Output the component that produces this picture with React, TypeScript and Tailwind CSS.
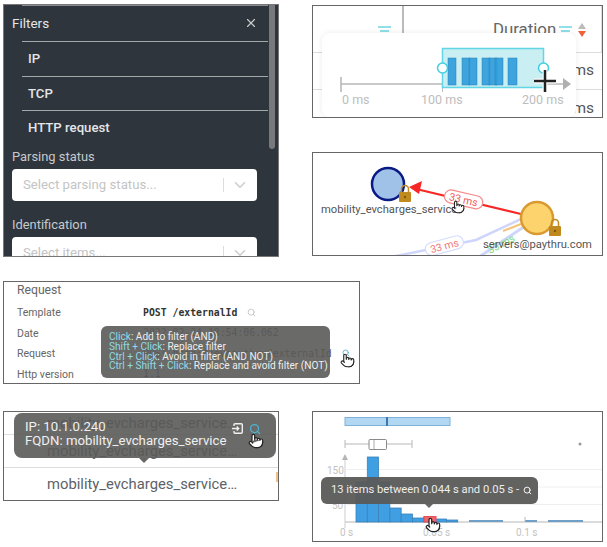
import React from "react";
import { ChevronDown, Pointer, Search, X } from "lucide-react";

function Hand({ className, size = 16 }: { className: string; size?: number }) {
  return (
    <Pointer
      size={size}
      strokeWidth={1.8}
      className={`absolute text-[#222] fill-white ${className}`}
    />
  );
}

function Lock({ x, y }: { x: number; y: number }) {
  return (
    <g transform={`translate(${x} ${y})`}>
      <path d="M-3.5 -1v-3a3.5 3.5 0 0 1 7 0v3" fill="none" stroke="#c08a1e" strokeWidth="1.5" />
      <rect x="-6" y="-1" width="12" height="10" rx="1" fill="#c08a1e" />
      <circle cx="0" cy="4" r="1.2" fill="#7d5a12" />
    </g>
  );
}

function FilterSelect({ label }: { label: string }) {
  return (
    <div className="flex h-8 w-[245px] shrink-0 items-center rounded bg-white pl-[11px] pr-[8px] text-[13.2px] text-[#c4c4c4]">
      <span className="flex-1">{label}</span>
      <span className="h-[14px] w-px bg-[#ddd]" />
      <ChevronDown size={18} className="ml-[7px] text-[#ccc]" />
    </div>
  );
}

function FiltersPanel() {
  return (
    <div className="relative h-[253px] w-[276px] overflow-hidden border border-[#777] bg-[#2f353d] text-[#e4e6e8]">
      <div className="absolute right-[3px] top-0 h-[144px] w-[6px] rounded-b bg-[#77797c]" />
      <div className="ml-[18px] mr-[10px] h-px bg-[#8a8d91]" />
      <div className="flex h-[35px] items-center justify-between pb-px pl-[8px] pr-[20px] text-[13.5px]">
        <span>Filters</span>
        <X size={14} className="text-[#c8cacc]" />
      </div>
      <div className="ml-[18px] mr-[10px]">
        {["IP", "TCP", "HTTP request"].map((name) => (
          <div
            key={name}
            className="flex h-[34.7px] items-center border-t border-[#a5a8ab] pl-[6px] text-[13.2px] font-medium"
          >
            {name}
          </div>
        ))}
      </div>
      <div className="mt-[2px] flex flex-col px-[8px] text-[12.9px] text-[#c6c9cc]">
        <span className="mb-[2px] leading-[20px]">Parsing status</span>
        <FilterSelect label="Select parsing status..." />
        <span className="mb-[2px] mt-[14px] leading-[20px]">Identification</span>
        <FilterSelect label="Select items..." />
      </div>
    </div>
  );
}

function DurationPanel() {
  const bars = [
    [448, 8], [462, 8], [469, 8], [482, 8], [489, 8], [495, 8], [508, 9],
  ];
  return (
    <div className="relative h-[113px] w-[291px] overflow-hidden border border-[#666] bg-white text-[#555]">
      <div className="flex h-[47px] border-b border-[#ddd]">
        <div className="relative w-[91px] border-r-2 border-[#bbb]">
          <div className="absolute right-[11px] top-[20px] flex w-[13px] flex-col items-center gap-[2px]">
            <span className="h-[2px] w-[13px] bg-[#8fe0e8]" />
            <span className="h-[2px] w-[9px] bg-[#8fe0e8]" />
            <span className="h-[2px] w-[5px] bg-[#8fe0e8]" />
          </div>
        </div>
        <div className="relative flex-1 border-r border-[#ddd]">
          <span className="absolute left-[89px] top-[11px] text-[16.8px] text-[#666]">Duration</span>
          <div className="absolute left-[155px] top-[20px] flex w-[13px] flex-col items-center gap-[2px]">
            <span className="h-[2px] w-[13px] bg-[#8fe0e8]" />
            <span className="h-[2px] w-[9px] bg-[#8fe0e8]" />
            <span className="h-[2px] w-[5px] bg-[#8fe0e8]" />
          </div>
          <div className="absolute left-[174px] top-[17px] h-0 w-0 border-x-[4px] border-b-[6px] border-x-transparent border-b-[#bbb]" />
          <div className="absolute left-[174px] top-[25px] h-0 w-0 border-x-[4px] border-t-[6px] border-x-transparent border-t-[#f0603a]" />
        </div>
      </div>
      <div className="flex h-[37px] items-center justify-end border-b border-[#ddd] pr-[8px] text-[15.5px]">ms</div>
      <div className="flex h-[37px] items-center justify-end pr-[8px] text-[15.5px]">ms</div>

      {/* range picker floating above the table */}
      <div className="absolute left-[9px] top-[27px] h-[84px] w-[254px] rounded-lg bg-white shadow-[0_0_6px_rgba(0,0,0,0.08)]">
        <svg width="254" height="84" className="block">
          <g transform="translate(-322 -33)">
            <line x1="341" y1="84" x2="564" y2="84" stroke="#c9c9c9" strokeWidth="2" />
            <path d="M563 78l8 6-8 6z" fill="#b0b0b0" />
            <line x1="341" y1="77" x2="341" y2="92" stroke="#b5b5b5" strokeWidth="1.5" />
            <line x1="442.500" y1="84" x2="442.500" y2="92" stroke="#c0c0c0" />
            <rect x="442.500" y="48.500" width="101" height="39" fill="#c9eff3" stroke="#62d6e4" strokeWidth="1.500" />
            {bars.map(([x, w]) => (
              <rect key={x} x={x} y="58" width={w} height="27" fill="#2f9bdc" fillOpacity="0.9" stroke="#2b7fb8" strokeWidth="0.5" />
            ))}
            <circle cx="442.500" cy="68" r="5" fill="white" stroke="#3fd0e0" strokeWidth="1.500" />
            <circle cx="543.500" cy="68" r="5" fill="white" stroke="#3fd0e0" strokeWidth="1.500" />
            <text x="342" y="103.500" fontSize="12.500" fill="#bdbdbd" fontFamily="Roboto, sans-serif">0 ms</text>
            <text x="421" y="103.500" fontSize="12.500" fill="#bdbdbd" fontFamily="Roboto, sans-serif">100 ms</text>
            <text x="522" y="103.500" fontSize="12.500" fill="#bdbdbd" fontFamily="Roboto, sans-serif">200 ms</text>
            <path d="M545 70v22M534 81h22" stroke="white" strokeWidth="5" />
            <path d="M545 70v22M534 81h22" stroke="#222" strokeWidth="2.500" />
          </g>
        </svg>
      </div>
    </div>
  );
}

function GraphPanel() {
  return (
    <div className="relative h-[104px] w-[291px] overflow-hidden border border-[#666] bg-white">
      <svg width="289" height="102" className="block" fontFamily="Roboto, sans-serif">
        <g transform="translate(-313 -153)">
          <path d="M521 219l-45 21-100 20" fill="none" stroke="#cfd6fb" strokeWidth="2.500" />
          <path d="M525 226l-46 31" fill="none" stroke="#cfd6fb" strokeWidth="3" />
          <path d="M521 224l-18 7" fill="none" stroke="#f5c27a" strokeWidth="2" />
          <line x1="521" y1="214" x2="412" y2="188" stroke="#f92626" strokeWidth="2" />
          <path d="M409 187l13-6-3 13z" fill="#f92626" />
          <circle cx="388" cy="184" r="16" fill="#a0c1e8" stroke="#0a1a85" strokeWidth="2.500" />
          <Lock x={405} y={193} />
          <circle cx="537" cy="218" r="16" fill="#fdd36e" stroke="#d99a30" strokeWidth="2.500" />
          <Lock x={555} y={227} />
          <g transform="rotate(13 464 200)">
            <rect x="444" y="193" width="39" height="13" rx="6.500" fill="white" stroke="#f98a8a" strokeWidth="1.200" />
            <text x="463.500" y="203.500" textAnchor="middle" fontSize="10.500" fill="#ef5a5a">33 ms</text>
          </g>
          <g transform="rotate(-15 445 246)">
            <rect x="425" y="239" width="39" height="13" rx="6.500" fill="white" stroke="#d5dcfb" strokeWidth="1.200" />
            <text x="444.500" y="249.500" textAnchor="middle" fontSize="10.500" fill="#ef7a7a">33 ms</text>
          </g>
          <text x="490" y="254" fontSize="10.500" fill="#7bdc7b" transform="rotate(-28 490 254)">33 ms</text>
          <text x="321" y="213" fontSize="11.200" fill="#555">mobility_evcharges_service</text>
          <text x="483" y="248" fontSize="11.200" fill="#555">servers@paythru.com</text>
        </g>
      </svg>
      <Hand size={14} className="left-[138px] top-[47px]" />
    </div>
  );
}

function RequestPanel() {
  const rows = [
    { name: "Template", value: "POST /externalId", strong: true },
    { name: "Date", value: "2022-02-24 18:54:06.062" },
    { name: "Request", value: "POST http://evpaythru/externalId" },
    { name: "Http version", value: "1.1" },
  ];
  return (
    <div className="relative h-[103px] w-[357px] overflow-hidden border border-[#666] bg-white pl-[13px] text-[10.500px] text-[#666]">
      <div className="h-[18px] text-[12.200px] leading-[16px]">Request</div>
      {rows.map((row) => (
        <div key={row.name} className="flex h-[20.500px] items-center">
          <span className="w-[126px] shrink-0 translate-y-[3px]">{row.name}</span>
          <span
            className={`translate-y-[3px] whitespace-nowrap font-['DejaVu_Sans_Mono',monospace] text-[9.800px] ${row.strong ? "font-bold text-[#333]" : "text-[#555]"}`}
          >
            {row.value}
          </span>
          {row.strong && <Search size={9} className="ml-[10px] translate-y-[2px] text-[#bbb]" />}
        </div>
      ))}
      <Search size={8} strokeWidth={2.5} className="absolute left-[338px] top-[67px] text-[#4fa8c8]" />
      <div className="absolute left-[97px] top-[44px] h-[52px] w-[229px] rounded-md bg-[#5a5a58]/90 px-[8px] py-[6px] text-[10.100px] leading-[9.800px] text-[#eeeeee]">
        {[
          ["Click", ": Add to filter (AND)"],
          ["Shift + Click", ": Replace filter"],
          ["Ctrl + Click", ": Avoid in filter (AND NOT)"],
          ["Ctrl + Shift + Click", ": Replace and avoid filter (NOT)"],
        ].map(([key, text]) => (
          <div key={key} className="whitespace-nowrap">
            <span className="text-[#8fdbe6]">{key}</span>
            {text}
          </div>
        ))}
      </div>
      <Hand size={15} className="left-[336px] top-[71px]" />
    </div>
  );
}

function ServicePanel() {
  return (
    <div className="relative h-[90px] w-[276px] overflow-hidden border border-[#666] bg-white text-[#666]">
      {[23, 33, 33].map((height, i) => (
        <div
          key={i}
          style={{ height }}
          className="flex items-center whitespace-nowrap border-b border-[#ddd] pl-[43px] text-[14.800px] text-[#5d6268] last:border-b-0"
        >
          mobility_evcharges_service…
        </div>
      ))}
      <span className="absolute right-0 top-[60px] h-[10px] w-[2px] bg-[#f2c28a]" />
      <div className="absolute left-[10px] top-[1px] h-[45px] w-[262px] rounded-lg bg-[#5a5a58]/90 pl-[11px] pt-[7px] text-[13.200px] leading-[14px] text-[#f0f0f0]">
        <div>IP: 10.1.0.240</div>
        <div>FQDN: mobility_evcharges_service</div>
        {/* box with an arrow going in */}
        <svg width="11" height="11" viewBox="0 0 11 11" fill="none" stroke="#f0f0f0" strokeWidth="1.4" className="absolute left-[218px] top-[10px]">
          <path d="M2 3V1.700A1 1 0 0 1 3 .700h6.300a1 1 0 0 1 1 1v7.600a1 1 0 0 1-1 1H3a1 1 0 0 1-1-1V8" />
          <path d="M0 5.500h6.500M4.700 3.500l2 2-2 2" />
        </svg>
        <Search size={12} strokeWidth={2.5} className="absolute left-[235px] top-[10px] text-[#4fb3d0]" />
      </div>
      <div className="absolute left-[135px] top-[46px] h-0 w-0 border-x-[5px] border-t-[5px] border-x-transparent border-t-[#666664]" />
      <Hand className="left-[244px] top-[21px]" />
    </div>
  );
}

function HistogramPanel() {
  const heights = [40, 65, 40, 14, 8, 4, 5, 3, 2];
  return (
    <div className="relative h-[131px] w-[291px] overflow-hidden border border-[#666] bg-white">
      <svg width="289" height="129" className="block" fontFamily="Roboto, sans-serif">
        <g transform="translate(-313 -412)">
          <rect x="345" y="417.500" width="105" height="8" fill="#b2d7f2" stroke="#7fb2da" />
          <rect x="386" y="417" width="2" height="9" fill="#3d78ad" />
          <line x1="345" y1="444" x2="412" y2="444" stroke="#b8b8b8" />
          <line x1="345" y1="440" x2="345" y2="448" stroke="#b8b8b8" />
          <line x1="412" y1="440" x2="412" y2="448" stroke="#b8b8b8" />
          <rect x="369" y="439.500" width="17.500" height="10" rx="1" fill="white" stroke="#8a8a8a" />
          <line x1="374" y1="440" x2="374" y2="449" stroke="#aaa" />
          <circle cx="580" cy="444" r="1.500" fill="#999" />
          <line x1="345" y1="460" x2="345" y2="528" stroke="#cdcdcd" />
          <path d="M342 460l3-6 3 6z" fill="#b5b5b5" />
          <line x1="345" y1="522" x2="602" y2="522" stroke="#cfcfcf" strokeWidth="1.500" />
          <line x1="345" y1="469.500" x2="602" y2="469.500" stroke="#efefef" />
          <line x1="345" y1="487" x2="602" y2="487" stroke="#efefef" />
          <line x1="345" y1="504.500" x2="602" y2="504.500" stroke="#efefef" />
          {heights.map((h, i) => (
            <rect key={i} x={356 + i * 11.300} y={522 - h} width="11.300" height={h} fill="#3f9fe2" stroke="#3c81b8" strokeWidth="0.800" />
          ))}
          <rect x="424" y="516.500" width="12" height="5.500" fill="#f0646b" stroke="#e24f57" />
          <rect x="469" y="520" width="22" height="2" fill="#6f9fc6" />
          <rect x="491" y="520" width="12" height="2" fill="#6f9fc6" />
          <rect x="525" y="520" width="12" height="2" fill="#6f9fc6" />
          <rect x="548" y="520" width="35" height="2" fill="#6f9fc6" />
          <line x1="525" y1="517" x2="525" y2="522" stroke="#bbb" />
          <text x="327" y="473.500" fontSize="10" fill="#c2c2c2">150</text>
          <text x="332" y="508.500" fontSize="10" fill="#c2c2c2">50</text>
          <text x="340" y="535.500" fontSize="10" fill="#c2c2c2">0 s</text>
          <text x="423" y="535.500" fontSize="10" fill="#c2c2c2">0.05 s</text>
          <text x="516" y="535.500" fontSize="10" fill="#c2c2c2">0.1 s</text>
        </g>
      </svg>
      <div className="absolute left-[8px] top-[65px] flex h-[27px] w-[217px] items-center whitespace-nowrap rounded-md bg-[#5a5a58]/95 pl-[10px] text-[11.200px] text-[#eeeeee]">
        13 items between 0.044 s and 0.05 s -
        <Search size={9} strokeWidth={2.5} className="ml-[4px] text-white" />
      </div>
      <div className="absolute left-[112px] top-[92px] h-0 w-0 border-x-[4px] border-t-[4px] border-x-transparent border-t-[#666664]" />
      <Hand className="left-[112px] top-[105px]" />
    </div>
  );
}

export default function App() {
  return (
    <div className="flex h-[547px] w-[607px] overflow-hidden bg-white font-['Roboto',sans-serif]">
      <div className="flex w-[312px] shrink-0 flex-col pl-[3px] pt-[4px]">
        <FiltersPanel />
        <div className="mt-[24px] w-[357px]">
          <RequestPanel />
        </div>
        <div className="mt-[27px]">
          <ServicePanel />
        </div>
      </div>
      <div className="flex flex-col pt-[5px]">
        <DurationPanel />
        <div className="mt-[34px]">
          <GraphPanel />
        </div>
        <div className="mt-[155px]">
          <HistogramPanel />
        </div>
      </div>
    </div>
  );
}
